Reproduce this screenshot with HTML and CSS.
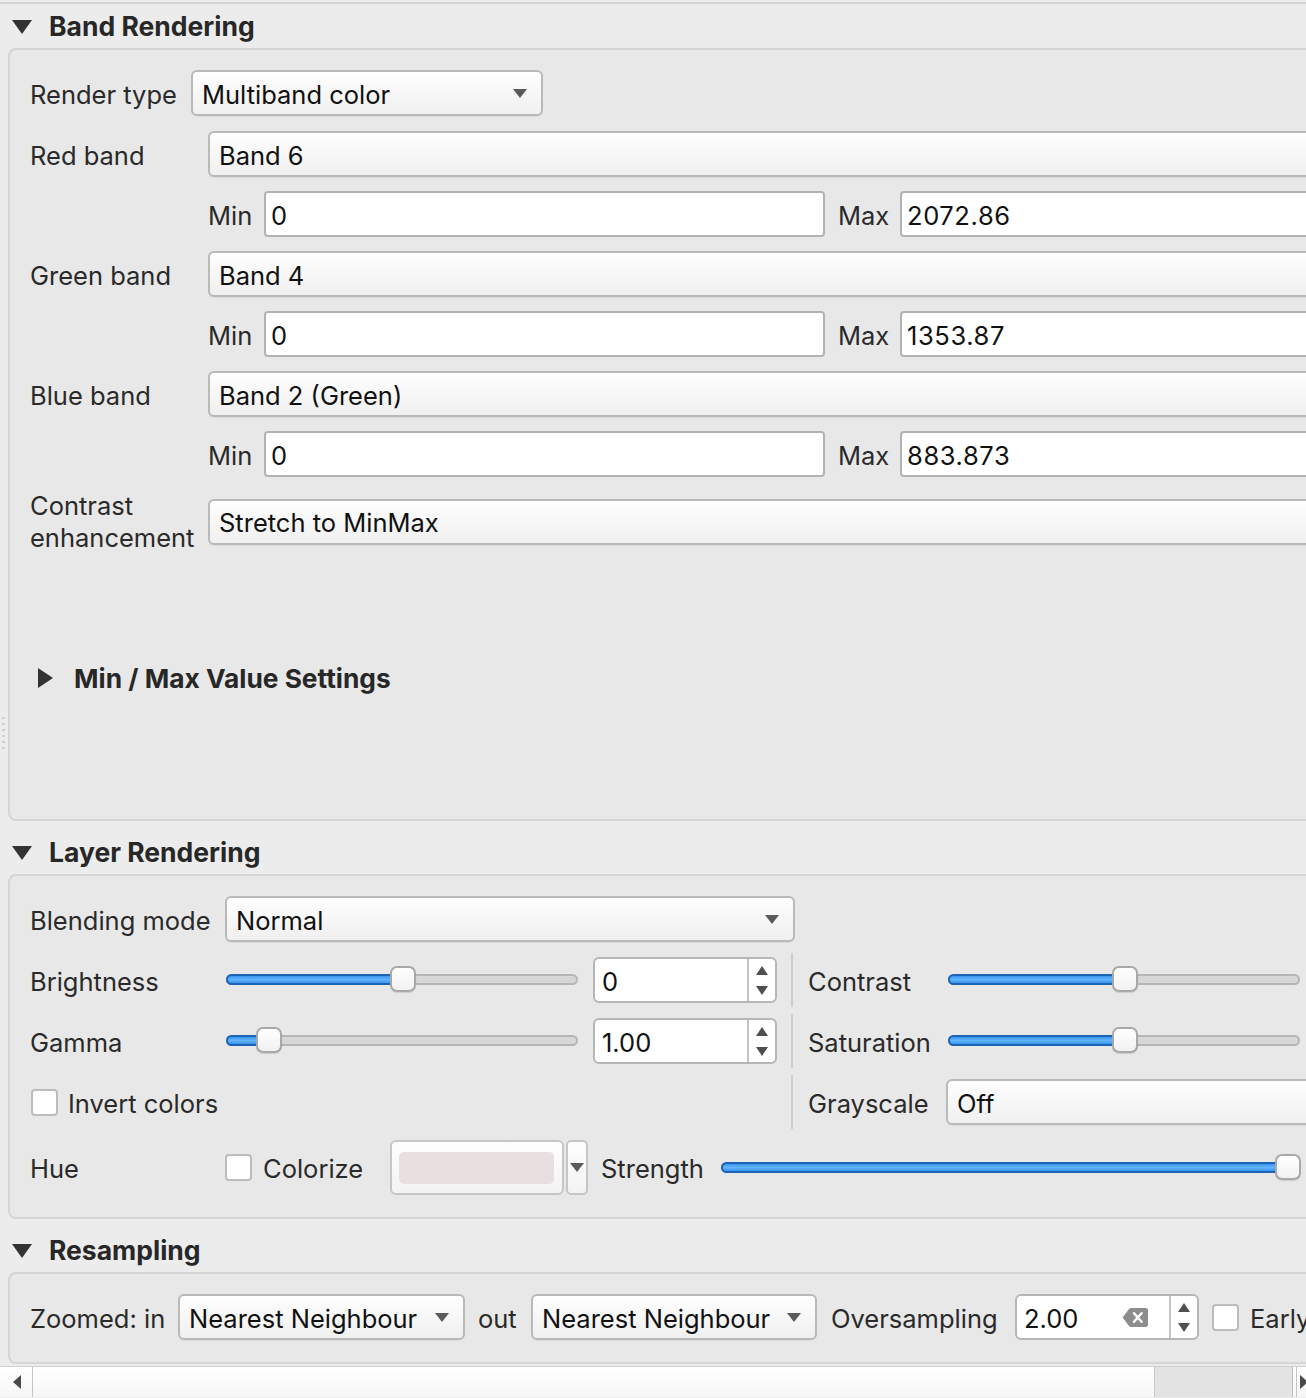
FILE: index.html
```html
<!DOCTYPE html>
<html>
<head>
<meta charset="utf-8">
<title>Layer Properties - Symbology</title>
<link rel="stylesheet" href="styles.css">
</head>
<body>
<div class="splitter"><i></i><i></i><i></i><i></i><i></i><i></i></div>
<div class="panel">
  <div class="topline"></div>

  <div class="gheader"><span class="tri-down"></span><span>Band Rendering</span></div>
  <div class="gbox band">
    <div class="row">
      <span class="lbl w161">Render type</span>
      <div class="combo w352"><span class="ctext">Multiband color</span><span class="carrow"></span></div>
    </div>
    <div class="bgrid">
      <span class="lbl">Red band</span>
      <div class="combo"><span class="ctext">Band 6</span></div>
      <span></span>
      <div class="mm">
        <span class="lbl l1">Min</span><div class="le w561">0</div>
        <span class="lbl l2">Max</span><div class="le grow num">2072.86</div>
      </div>

      <span class="lbl">Green band</span>
      <div class="combo"><span class="ctext">Band 4</span></div>
      <span></span>
      <div class="mm">
        <span class="lbl l1">Min</span><div class="le w561">0</div>
        <span class="lbl l2">Max</span><div class="le grow num">1353.87</div>
      </div>

      <span class="lbl">Blue band</span>
      <div class="combo"><span class="ctext">Band 2 (Green)</span></div>
      <span></span>
      <div class="mm">
        <span class="lbl l1">Min</span><div class="le w561">0</div>
        <span class="lbl l2">Max</span><div class="le grow num">883.873</div>
      </div>

      <span class="lbl two">Contrast<br>enhancement</span>
      <div class="combo"><span class="ctext">Stretch to MinMax</span></div>
    </div>
    <div class="subheader"><span class="tri-right"></span><span>Min / Max Value Settings</span></div>
  </div>

  <div class="gheader next"><span class="tri-down"></span><span>Layer Rendering</span></div>
  <div class="gbox layer">
    <div class="row">
      <span class="lbl w195">Blending mode</span>
      <div class="combo w570"><span class="ctext">Normal</span><span class="carrow"></span></div>
    </div>
    <div class="row">
      <span class="lbl w196">Brightness</span>
      <div class="slider w352"><div class="track"><div class="fill" style="width:177px"></div></div><div class="handle" style="left:164px"></div></div>
      <div class="spin w184 ml15"><span class="sval">0</span><div class="sbtns"><span class="up"></span><span class="down"></span></div></div>
      <span class="vsep"></span>
      <span class="lbl w140">Contrast</span>
      <div class="slider w352"><div class="track"><div class="fill" style="width:177px"></div></div><div class="handle" style="left:164px"></div></div>
    </div>
    <div class="row">
      <span class="lbl w196">Gamma</span>
      <div class="slider w352"><div class="track"><div class="fill" style="width:43px"></div></div><div class="handle" style="left:30px"></div></div>
      <div class="spin w184 ml15"><span class="sval">1.00</span><div class="sbtns"><span class="up"></span><span class="down"></span></div></div>
      <span class="vsep"></span>
      <span class="lbl w140">Saturation</span>
      <div class="slider w352"><div class="track"><div class="fill" style="width:177px"></div></div><div class="handle" style="left:164px"></div></div>
    </div>
    <div class="row">
      <div class="chkwrap w761"><span class="chk first"></span><span class="lbl">Invert colors</span></div>
      <span class="vsep nomargin"></span>
      <span class="lbl w138">Grayscale</span>
      <div class="combo grow"><span class="ctext">Off</span></div>
    </div>
    <div class="row hue">
      <span class="lbl w195">Hue</span>
      <span class="chk"></span>
      <span class="lbl w127 ml11">Colorize</span>
      <div class="colorbtn"><span class="swatch"></span></div>
      <div class="colorarrow"><span class="carrow small"></span></div>
      <span class="lbl w120 ml13">Strength</span>
      <div class="slider w580"><div class="track"><div class="fill" style="width:567px"></div></div><div class="handle" style="left:554px"></div></div>
    </div>
  </div>

  <div class="gheader next"><span class="tri-down"></span><span>Resampling</span></div>
  <div class="gbox resamp">
    <div class="row">
      <span class="lbl w148">Zoomed: in</span>
      <div class="combo w287"><span class="ctext">Nearest Neighbour</span><span class="carrow"></span></div>
      <span class="lbl w53 ml13">out</span>
      <div class="combo w286"><span class="ctext">Nearest Neighbour</span><span class="carrow"></span></div>
      <span class="lbl w184 ml14">Oversampling</span>
      <div class="spin w184"><span class="sval">2.00</span>
        <svg class="clear" width="26" height="19" viewBox="0 0 26 19"><path d="M0.6 9.5 L6.8 1.2 Q7.7 0 9.2 0 H23.5 Q26 0 26 2.5 V16.5 Q26 19 23.5 19 H9.2 Q7.7 19 6.8 17.8 Z" fill="#8d8d8d"/><path d="M12 5.2 L19.6 13.8 M19.6 5.2 L12 13.8" stroke="#fff" stroke-width="2.4" stroke-linecap="round"/></svg>
        <div class="sbtns"><span class="up"></span><span class="down"></span></div></div>
      <span class="chk ml13"></span>
      <span class="lbl ml11">Early</span>
    </div>
  </div>
</div>
<div class="hscroll">
  <div class="sb-left"><span class="tri-l"></span></div>
  <div class="sb-track"><div class="sb-thumb"></div></div>
  <div class="sb-right"><span class="tri-r"></span></div>
</div>
</body>
</html>
```
FILE: styles.css
```css
* { box-sizing: border-box; }
html, body { margin: 0; padding: 0; }
body {
  width: 1306px;
  height: 1398px;
  overflow: hidden;
  background: #ececec;
  font-family: Inter, "Liberation Sans", sans-serif;
  font-size: 25.5px;
  color: #2a2a2a;
  position: relative;
}
.panel { width: 1520px; }
.topline { height: 2px; margin-top: 2px; background: #d3d3d3; }

.splitter {
  position: absolute;
  left: 2px;
  top: 717px;
  display: flex;
  flex-direction: column;
  gap: 4px;
}
.splitter i { display: block; width: 3px; height: 2px; background: #d0d0d0; }

.gheader {
  height: 44px;
  display: flex;
  align-items: center;
  padding-left: 12px;
  font-weight: 700;
  font-size: 26.5px;
  color: #272727;
}
.gheader.next { margin-top: 9px; }
.tri-down {
  width: 0; height: 0;
  border-left: 10.5px solid transparent;
  border-right: 10.5px solid transparent;
  border-top: 14px solid #333;
  margin-right: 17px;
  margin-top: 2px;
}
.tri-right {
  width: 0; height: 0;
  border-top: 10px solid transparent;
  border-bottom: 10px solid transparent;
  border-left: 15px solid #333;
  margin-right: 21px;
}

.gbox {
  margin-left: 8px;
  border: 2px solid #d5d5d5;
  border-radius: 8px;
  background: #e8e8e8;
  padding: 20px 0 0 20px;
}
.band { padding-bottom: 121px; }
.layer { padding-bottom: 22px; display: flex; flex-direction: column; gap: 15px; }
.resamp { padding-bottom: 22px; }

.row { display: flex; align-items: center; height: 46px; }
.row.hue { height: 55px; }

.lbl { white-space: nowrap; flex: none; padding-top: 2px; }
.lbl.two { line-height: 32px; height: 62px; padding-top: 0; margin-top: -1px; }

.w120 { width: 120px; } .w127 { width: 127px; } .w138 { width: 138px; } .w140 { width: 140px; }
.w148 { width: 148px; } .w161 { width: 161px; } .w184 { width: 184px; } .w195 { width: 195px; }
.w196 { width: 196px; } .w53 { width: 53px; } .w286 { width: 286px; } .w287 { width: 287px; }
.w352 { width: 352px; } .w561 { width: 561px; } .w570 { width: 570px; } .w580 { width: 580px; }
.w761 { width: 761px; }
.ml11 { margin-left: 11px; } .ml13 { margin-left: 13px; } .ml14 { margin-left: 14px; } .ml15 { margin-left: 15px; }
.grow { flex: 1; }

.bgrid {
  display: grid;
  grid-template-columns: 178px 1fr;
  row-gap: 14px;
  margin-top: 15px;
  align-items: center;
}

.combo {
  flex: none;
  height: 46px;
  display: flex;
  align-items: center;
  padding-left: 9px;
  padding-right: 14px;
  padding-top: 2px;
  background: linear-gradient(#fefefe, #f0f0f0);
  border: 2px solid #b9b9b9;
  border-radius: 6px;
  box-shadow: 0 1px 0 rgba(0,0,0,0.06);
  color: #111;
}
.combo.grow { flex: 1; }
.bgrid .combo { width: 100%; }
.ctext { flex: 1; white-space: nowrap; overflow: hidden; }
.carrow {
  width: 0; height: 0;
  border-left: 7.5px solid transparent;
  border-right: 7.5px solid transparent;
  border-top: 9px solid #5b5b5b;
  margin-top: -2px;
}
.carrow.small {
  border-left-width: 7px;
  border-right-width: 7px;
  border-top-width: 9px;
  margin-top: 0;
}

.mm { display: flex; align-items: center; height: 46px; }
.mm .l1 { width: 56px; }
.mm .l2 { width: 62px; margin-left: 13px; }
.le {
  flex: none;
  height: 46px;
  background: #fff;
  border: 2px solid #b2b2b2;
  border-radius: 4px;
  padding-left: 5px;
  padding-top: 2px;
  display: flex;
  align-items: center;
  color: #111;
}
.le.grow { flex: 1; }
.le.num { letter-spacing: 0.6px; }

.subheader {
  height: 40px;
  margin-top: 106px;
  padding-left: 8px;
  display: flex;
  align-items: center;
  font-weight: 700;
  font-size: 26.3px;
  color: #272727;
}

.slider { position: relative; height: 46px; flex: none; }
.track {
  position: absolute;
  left: 0; right: 0;
  top: 17px;
  height: 11px;
  border: 2px solid #b6b6b6;
  border-radius: 6px;
  background: #d7d7d7;
}
.fill {
  position: absolute;
  left: -2px; top: -2px; bottom: -2px;
  border: 2px solid #1c64b6;
  border-radius: 6px;
  background: linear-gradient(#3b95ee, #63b4ff 50%, #3b95ee);
}
.handle {
  position: absolute;
  top: 9px;
  width: 26px;
  height: 26px;
  border: 2px solid #a8a8a8;
  border-radius: 7px;
  background: linear-gradient(#ffffff, #f1f1f1);
  box-shadow: 0 1px 1px rgba(0,0,0,0.12);
}

.spin {
  flex: none;
  height: 46px;
  display: flex;
  align-items: center;
  background: #fff;
  border: 2px solid #b6b6b6;
  border-radius: 6px;
  color: #111;
}
.sval { flex: 1; padding-left: 7px; padding-top: 2px; }
.clear { margin-right: 21px; flex: none; }
.sbtns {
  width: 28px;
  height: 100%;
  border-left: 2px solid #c4c4c4;
  display: flex;
  flex-direction: column;
  align-items: center;
  justify-content: center;
  gap: 11px;
}
.up {
  width: 0; height: 0;
  border-left: 6.5px solid transparent;
  border-right: 6.5px solid transparent;
  border-bottom: 9px solid #4f4f4f;
}
.down {
  width: 0; height: 0;
  border-left: 6.5px solid transparent;
  border-right: 6.5px solid transparent;
  border-top: 9px solid #4f4f4f;
}

.vsep {
  flex: none;
  width: 2px;
  height: 54px;
  margin: -4px 15px -4px 14px;
  background: #cdcdcd;
}
.vsep.nomargin { margin-left: 0; }

.chkwrap { display: flex; align-items: center; flex: none; }
.chk {
  flex: none;
  width: 27px;
  height: 27px;
  background: #fff;
  border: 2px solid #bcbcbc;
  border-radius: 4px;
}
.chk.first { margin-left: 1px; margin-right: 10px; }

.colorbtn {
  flex: none;
  width: 174px;
  height: 55px;
  border: 2px solid #c6c6c6;
  border-radius: 6px;
  background: linear-gradient(#fefefe, #f3f3f3);
  padding: 10px 0 0 7px;
}
.swatch {
  display: block;
  width: 155px;
  height: 32px;
  border-radius: 5px;
  background: #e9dfe0;
}
.colorarrow {
  flex: none;
  width: 22px;
  height: 55px;
  margin-left: 2px;
  border: 2px solid #c6c6c6;
  border-radius: 5px;
  background: linear-gradient(#fefefe, #f3f3f3);
  display: flex;
  align-items: center;
  justify-content: center;
}

.hscroll {
  width: 1306px;
  height: 31px;
  margin-top: 2px;
  display: flex;
  border-top: 1px solid #cfcfcf;
  background: linear-gradient(#ffffff, #f7f7f7);
}
.sb-left {
  flex: none;
  width: 33px;
  border-right: 1px solid #c4c4c4;
  display: flex;
  align-items: center;
  padding-left: 13px;
}
.tri-l {
  width: 0; height: 0;
  border-top: 7px solid transparent;
  border-bottom: 7px solid transparent;
  border-right: 8px solid #4a4a4a;
}
.sb-track { flex: 1; display: flex; justify-content: flex-end; }
.sb-thumb {
  width: 139px;
  margin-right: 3px;
  background: #e3e3e3;
  border-left: 1px solid #c9c9c9;
  border-right: 1px solid #bdbdbd;
}
.sb-right {
  flex: none;
  width: 10px;
  border-left: 1px solid #c4c4c4;
  display: flex;
  align-items: center;
  padding-left: 3px;
  overflow: hidden;
}
.tri-r {
  flex: none;
  width: 0; height: 0;
  border-top: 7px solid transparent;
  border-bottom: 7px solid transparent;
  border-left: 8px solid #4a4a4a;
}
```
